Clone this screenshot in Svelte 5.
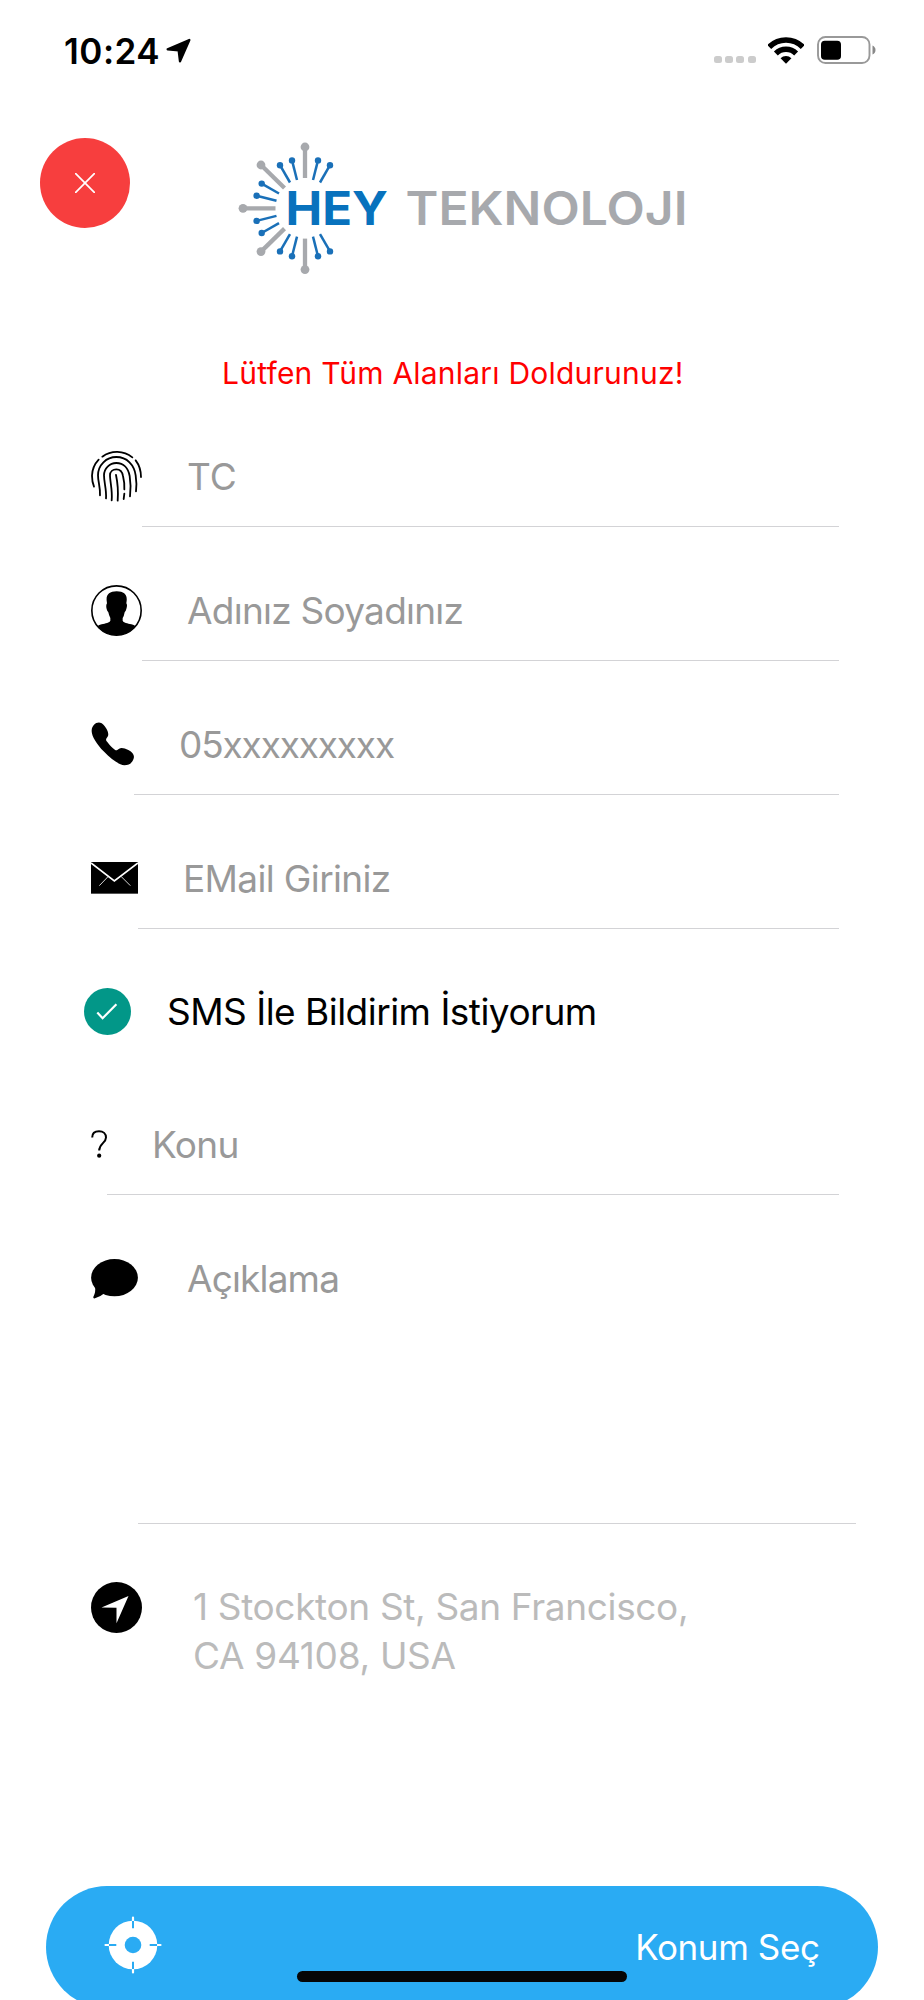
<script>
  const greyRays = [
    [67, 5, 67, 36],
    [23, 23, 46.5, 46]
  ];
  const blueRays = [
    [42, 23.2, 52, 40.5],
    [54, 18.4, 59, 38],
    [80, 18.4, 75, 38],
    [92, 23.2, 82, 40.5],
    [23.7, 41.6, 41, 51.5],
    [18.6, 53.7, 38.5, 58.7]
  ];
  const sides = ['', 'translate(0 132.6) scale(1 -1)'];
</script>

<main>
  <div class="status">
    <span class="time">10:24</span>
    <svg class="arrow" width="25" height="25" viewBox="0 0 75 75">
      <path d="M70 6 L5 34 L38 37 L42 70 Z" stroke="#000" stroke-width="7" stroke-linejoin="round" />
    </svg>
    <div class="dots"><i></i><i></i><i></i><i></i></div>
    <svg class="wifi" width="36" height="27" viewBox="0 0 108 81">
      <path d="M3.8 29.8 A71 71 0 0 1 104.2 29.8 M23.6 49.6 A43 43 0 0 1 84.4 49.6" fill="none" stroke="#000" stroke-width="16.5" />
      <path d="M54 80 L37.7 63.7 A23 23 0 0 1 70.3 63.7 Z" />
    </svg>
    <svg class="battery" width="60" height="28" viewBox="0 0 60 28">
      <rect x="1" y="1" width="51.5" height="26" rx="7.5" fill="none" stroke="#999" stroke-width="1.9" />
      <rect x="4" y="4.7" width="20" height="19" rx="3.8" />
      <path d="M55.5 9.5 Q58.5 11 58.5 14 Q58.5 17 55.5 18.5 Z" fill="#888" />
    </svg>
  </div>

  <header>
    <div class="close">
      <svg width="20" height="20" viewBox="0 0 20 20">
        <path d="M.7 .7 L19.3 19.3 M19.3 .7 L.7 19.3" stroke="#fff" stroke-width="1.7" stroke-linecap="round" />
      </svg>
    </div>
    <svg class="logo" width="454" height="134" viewBox="0 0 454 134">
      <g fill="#a7a9ad" stroke="#a7a9ad">
        {#each sides as side}
          <g transform={side}>
            {#each greyRays as [x1, y1, x2, y2]}
              <line {x1} {y1} {x2} {y2} stroke-width="4.3" />
              <circle cx={x1} cy={y1} r="4.4" stroke="none" />
            {/each}
          </g>
        {/each}
        <line x1="5" y1="66.3" x2="37.5" y2="66.3" stroke-width="4.3" />
        <circle cx="5" cy="66.3" r="4.4" stroke="none" />
      </g>
      <g fill="#1a70b8" stroke="#1a70b8">
        {#each sides as side}
          <g transform={side}>
            {#each blueRays as [x1, y1, x2, y2]}
              <line {x1} {y1} {x2} {y2} stroke-width="2.5" />
              <circle cx={x1} cy={y1} r="3.2" stroke="none" />
            {/each}
          </g>
        {/each}
      </g>
      <text x="47.5" y="83" fill="#0872bd" textLength="102.5" lengthAdjust="spacingAndGlyphs">HEY</text>
      <text class="grey" x="167.5" y="83" fill="#a7a9ad" textLength="282" lengthAdjust="spacingAndGlyphs">TEKNOLOJI</text>
    </svg>
  </header>

  <p class="warning">Lütfen Tüm Alanları Doldurunuz!</p>

  <form>
    <div class="row">
      <svg width="51" height="52" viewBox="0 0 153 156">
        <g fill="none" stroke="#000" stroke-width="5.4" stroke-linecap="round">
          <path d="M34 20 A74 74 0 0 1 124 22" />
          <path d="M23 29 A73 73 0 0 0 3 77 Q3 95 9 110" />
          <path d="M134 31 Q150 52 150 81" />
          <path d="M27 136 C28 110 21 95 21 76 C21 45 46 21 76 21 C108 21 130 45 134 76 Q138 102 135 124" />
          <path d="M45 145 C47 118 39 98 39 76 C39 55 56 39 76 39 C98 39 112 55 116 78 Q121 108 117 139" />
          <path d="M62 151 C65 122 57 95 57 76 C57 64 66 58 76 58 C88 58 94 66 96 78 Q101 98 100 118 M100 131 Q99 140 98 147" />
          <path d="M75 75 Q83 112 80 152" />
        </g>
      </svg>
      <div class="field tc">TC</div>
    </div>

    <div class="row">
      <svg width="51" height="51" viewBox="0 0 153 153">
        <circle cx="76.5" cy="76.5" r="74" fill="none" stroke="#000" stroke-width="4.8" />
        <path d="M77 19 C99 19 109 29 107 47 L106 55 Q110 60 106 72 Q105 78 101 82 Q99 94 95 99 L95 107 C97 113 110 115 121 118 Q129 120 134 124 A75 75 0 0 1 19 124 Q24 120 32 118 C43 115 56 113 58 107 L58 99 Q54 92 52 82 Q48 78 47 72 Q44 60 48 55 L47 47 C45 29 55 19 77 19 Z" />
      </svg>
      <div class="field name">Adınız Soyadınız</div>
    </div>

    <div class="row">
      <svg width="43" height="44" viewBox="0 0 130 132">
        <path d="M24 1 C33 1 43 10 50 27 C54 38 52 42 48 47 C44 53 45 55 50 61 C57 70 64 78 73 84 C78 86 81 83 85 80 C92 76 102 79 113 84 C127 91 132 101 129 110 C125 124 115 130 101 130 C83 129 60 111 39 89 C17 66 1 41 2 25 C3 11 13 1 24 1 Z" />
      </svg>
      <div class="field phone">05xxxxxxxxx</div>
    </div>

    <div class="row">
      <svg width="47" height="32" viewBox="0 0 141 96">
        <rect width="141" height="95" />
        <path d="M0 3 L70 57 L141 3" fill="none" stroke="#fff" stroke-width="5" />
        <path d="M52 43 L25 71 M90 43 L118 71" stroke="#fff" stroke-width="2.5" />
      </svg>
      <div class="field mail">EMail Giriniz</div>
    </div>

    <div class="row sms">
      <svg width="47" height="47" viewBox="0 0 47 47">
        <circle cx="23.5" cy="23.5" r="23.5" fill="#029788" />
        <path d="M13.3 24.6 L18.6 30.2 L32.4 16.2" fill="none" stroke="#fff" stroke-width="2.2" />
      </svg>
      <div class="field">SMS İle Bildirim İstiyorum</div>
    </div>

    <div class="row">
      <svg width="16" height="28" viewBox="0 0 16 28">
        <path d="M1.2 7.5 C1.2 3.5 3.8 1.2 8 1.2 C12.3 1.2 15 3.8 15 7.5 C15 13 8.2 13.5 8.2 20.5" fill="none" stroke="#000" stroke-width="2" />
        <circle cx="8.2" cy="25.7" r="2.1" />
      </svg>
      <div class="field subject">Konu</div>
    </div>

    <div class="row description">
      <svg width="47" height="40" viewBox="0 0 47 40">
        <ellipse cx="23.5" cy="18.7" rx="23.4" ry="18.6" />
        <path d="M4 27 Q5 33 2.3 38 Q2 39.8 4 39.3 Q9 38 13 34.5 Z" />
      </svg>
      <div class="field about">Açıklama</div>
    </div>

    <div class="address">
      <svg width="51" height="51" viewBox="0 0 51 51">
        <circle cx="25.5" cy="25.5" r="25.5" />
        <path d="M37.5 14 L10.5 25.5 L25.5 25.7 L25.5 41.3 Z" fill="#fff" />
      </svg>
      <div class="place">
        <span class="street">1 Stockton St, San Francisco,</span>
        <span class="city">CA 94108, USA</span>
      </div>
    </div>
  </form>

  <div class="pick">
    <svg width="58" height="58" viewBox="0 0 58 58">
      <path d="M29 1.5 V56.5 M1.5 29 H56.5" stroke="#fff" stroke-width="2.2" stroke-linecap="round" />
      <circle cx="29" cy="29" r="24.3" fill="#fff" />
      <path d="M29 5 V12.3 M29 45.7 V53 M5 29 H12.3 M45.7 29 H53" stroke="#2aabf3" stroke-width="2" />
      <circle cx="29" cy="29" r="8.3" fill="#2aabf3" />
    </svg>
    <span>Konum Seç</span>
  </div>
  <div class="home"></div>
</main>

<style>
  :global(body) {
    margin: 0;
    background: #fff;
  }

  main {
    position: relative;
    width: 924px;
    height: 2000px;
    overflow: hidden;
    background: #fff;
    color: #000;
    font-family: Inter, "Liberation Sans", sans-serif;
  }

  svg {
    display: block;
    flex: none;
  }

  .status {
    display: flex;
    align-items: center;
    box-sizing: border-box;
    height: 100px;
    padding: 0 48px 0 64px;
  }

  .time {
    width: 102px;
    margin-top: 1px;
    font-size: 35px;
    font-weight: 600;
    letter-spacing: .5px;
    white-space: nowrap;
  }

  .arrow {
    margin-top: 1px;
  }

  .dots {
    display: flex;
    gap: 3.2px;
    margin: 19px 12.5px 0 auto;
  }

  .dots i {
    width: 8px;
    height: 7.5px;
    border-radius: 2.5px;
    background: #ccc;
  }

  .wifi {
    margin-right: 13px;
  }

  .battery {
    margin-right: -1px;
  }

  header {
    display: flex;
    align-items: center;
    height: 166px;
    padding-left: 40px;
  }

  .close {
    display: flex;
    align-items: center;
    justify-content: center;
    width: 90px;
    height: 90px;
    border-radius: 50%;
    background: #f73e3e;
  }

  .logo {
    margin: 52px 0 0 108px;
    font-size: 46px;
    font-weight: 700;
  }

  .grey {
    font-weight: 600;
  }

  .warning {
    height: 40px;
    margin: 87px 0 0;
    padding-left: 222px;
    color: #f00;
    font-size: 30px;
    letter-spacing: .22px;
    line-height: 40px;
    white-space: nowrap;
  }

  form {
    padding: 0 85px 0 91px;
    font-size: 37px;
    line-height: 49px;
  }

  .row {
    display: flex;
    align-items: center;
    box-sizing: border-box;
    height: 134px;
  }

  .row svg {
    margin-top: 32px;
  }

  .field {
    flex: 1;
    box-sizing: border-box;
    height: 134px;
    padding: 58.5px 0 0 45px;
    border-bottom: 1px solid #d3d3d6;
    color: #999;
    letter-spacing: -.65px;
    white-space: nowrap;
  }

  .tc {
    letter-spacing: 0;
  }

  .name {
    letter-spacing: -.75px;
  }

  .phone {
    letter-spacing: -1.15px;
  }

  .sms {
    height: 132px;
    margin-left: -7px;
  }

  .sms .field {
    height: 132px;
    padding: 57.5px 0 0 36px;
    border-bottom: 0;
    color: #000;
    letter-spacing: -.52px;
  }

  .description {
    align-items: flex-start;
    height: 329px;
    margin-right: -17px;
  }

  .description svg {
    margin-top: 64px;
  }

  .description .field {
    height: 329px;
    padding-left: 49px;
    letter-spacing: -.85px;
  }

  .address {
    display: flex;
    padding-top: 58px;
    color: #bbb;
  }

  .place {
    display: flex;
    flex-direction: column;
    margin-left: 51px;
    white-space: nowrap;
  }

  .street {
    letter-spacing: -.35px;
  }

  .city {
    letter-spacing: -.3px;
  }

  .pick {
    display: flex;
    align-items: center;
    justify-content: space-between;
    position: absolute;
    left: 46px;
    top: 1886px;
    box-sizing: border-box;
    width: 832px;
    height: 122px;
    padding: 0 58.5px 0 57.5px;
    border-radius: 61px;
    background: #2aabf3;
    color: #fff;
    font-size: 35px;
    letter-spacing: -.4px;
  }

  .pick svg {
    margin-bottom: 4px;
  }

  .home {
    position: absolute;
    left: 297px;
    top: 1971px;
    width: 330px;
    height: 11px;
    border-radius: 6px;
    background: #060606;
  }
</style>
